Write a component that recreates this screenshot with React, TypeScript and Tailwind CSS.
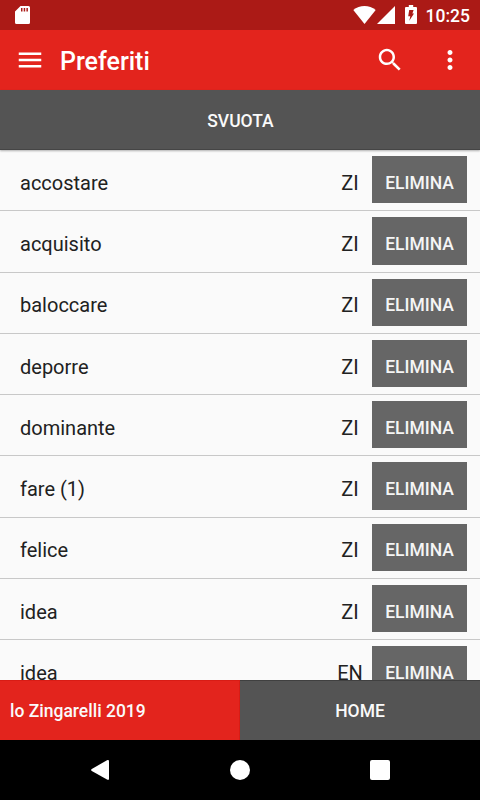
import {FunctionComponent} from 'react'

interface IFavorite {
    word: string
    dictionary: string
}

interface IProps {
    favorite: IFavorite
}

const favorites: IFavorite[] = [
    {word: "accostare", dictionary: "ZI"},
    {word: "acquisito", dictionary: "ZI"},
    {word: "baloccare", dictionary: "ZI"},
    {word: "deporre", dictionary: "ZI"},
    {word: "dominante", dictionary: "ZI"},
    {word: "fare (1)", dictionary: "ZI"},
    {word: "felice", dictionary: "ZI"},
    {word: "idea", dictionary: "ZI"},
    {word: "idea", dictionary: "EN"},
]

const StatusBar: FunctionComponent = () => (
    <div className="flex h-[30px] shrink-0 items-center bg-[#ab1a16] pl-[15px] pr-[10px] text-white">
        <svg className="h-[18px] w-[15px]" viewBox="0 0 15 18" fill="currentColor">
            <path fillRule="evenodd"
                  d="M5.5 0H13.5Q15 0 15 1.5V16.5Q15 18 13.5 18H1.5Q0 18 0 16.5V5.5ZM6 2V5.5H7.5V2ZM8.7 2V5.5H10.2V2ZM11.4 2V5.5H12.9V2Z"/>
        </svg>
        <svg className="ml-auto h-[18px] w-[23px]" viewBox="0 0 23 18" fill="currentColor">
            <path d="M0.3 3.9C6.5 -1.3 16.5 -1.3 22.7 3.9L11.5 18Z"/>
        </svg>
        <svg className="ml-px h-[18px] w-[18px]" viewBox="0 0 18 18" fill="currentColor">
            <path d="M18 0V18H0Z"/>
        </svg>
        <svg className="mb-px ml-[10px] h-[19px] w-[12px]" viewBox="0 0 12 19" fill="currentColor">
            <path fillRule="evenodd"
                  d="M3.8 0H8.2V2H11Q12 2 12 3V18Q12 19 11 19H1Q0 19 0 18V3Q0 2 1 2H3.8ZM4.2 5H8.6L7.4 8.6H9L4.3 15.8L5.3 11.2H3.2Z"/>
        </svg>
        <span className="ml-[9px] pt-[2px] text-[17.5px] font-medium leading-[28px]">10:25</span>
    </div>
)

const Toolbar: FunctionComponent = () => (
    <div className="flex h-[60px] shrink-0 items-center bg-[#e3241d] pl-[15px] pr-[15px] text-white">
        <svg className="h-[30px] w-[30px]" viewBox="0 0 24 24" fill="currentColor">
            <path d="M3 18h18v-2H3v2zm0-5h18v-2H3v2zm0-7v2h18V6H3z"/>
        </svg>
        <h1 className="ml-[15px] pt-[4px] text-[25px] font-medium leading-[56px]">Preferiti</h1>
        <svg className="ml-auto h-[30px] w-[30px]" viewBox="0 0 24 24" fill="currentColor">
            <path
                d="M15.5 14h-.79l-.28-.27C15.41 12.59 16 11.11 16 9.5 16 5.91 13.09 3 9.5 3S3 5.91 3 9.5 5.91 16 9.5 16c1.61 0 3.09-.59 4.23-1.57l.27.28v.79l5 4.99L20.49 19l-4.99-5zm-6 0C7.01 14 5 11.99 5 9.5S7.01 5 9.5 5 14 7.01 14 9.5 11.99 14 9.5 14z"/>
        </svg>
        <svg className="ml-[30px] h-[30px] w-[30px]" viewBox="0 0 24 24" fill="currentColor">
            <path
                d="M12 8c1.1 0 2-.9 2-2s-.9-2-2-2-2 .9-2 2 .9 2 2 2zm0 2c-1.1 0-2 .9-2 2s.9 2 2 2 2-.9 2-2-.9-2-2-2zm0 6c-1.1 0-2 .9-2 2s.9 2 2 2 2-.9 2-2-.9-2-2-2z"/>
        </svg>
    </div>
)

const FavoriteRow: FunctionComponent<IProps> = ({favorite}) => (
    <li className="flex h-[61.25px] shrink-0 items-start border-b border-[#c8c8c8] pl-5 pr-[13px] pt-[6.2px]">
        <span className="pt-[2.75px] text-[20px] leading-[48px] text-[#212121]">{favorite.word}</span>
        <span className="ml-auto w-[52px] pt-[2.75px] text-center text-[20px] leading-[48px] text-[#212121]">
            {favorite.dictionary}
        </span>
        <button
            className="ml-[-4px] h-[47.2px] w-[95px] bg-[#666666] pt-[6px] text-[17.5px] font-medium leading-[40px] text-[#f5f5f5]">
            ELIMINA
        </button>
    </li>
)

const NavigationBar: FunctionComponent = () => (
    <div className="flex h-[60px] shrink-0 items-center justify-center gap-[120px] bg-black text-white">
        <svg className="h-5 w-5" viewBox="0 0 20 20" fill="currentColor">
            <path d="M17 0.2Q19 -0.6 19 1.2V18.8Q19 20.6 17 19.6L1.8 11Q0.4 10 1.8 9Z"/>
        </svg>
        <div className="h-5 w-5 rounded-full bg-white"/>
        <div className="h-5 w-5 rounded-[2px] bg-white"/>
    </div>
)

const App: FunctionComponent = () => {
    return (
        <div className="flex h-[800px] w-[480px] flex-col overflow-hidden bg-[#fafafa] font-['Roboto',sans-serif]">
            <StatusBar/>
            <Toolbar/>
            <button
                className="z-10 h-[60px] w-full shrink-0 border-b border-[#454545] bg-[#545454] pl-px pt-[4px] text-[17.5px] font-medium text-[#fafafa] shadow-[0_1px_2px_rgba(0,0,0,0.3)]">
                SVUOTA
            </button>
            <ul className="flex min-h-0 flex-1 flex-col overflow-hidden">
                {favorites.map((favorite, index) => <FavoriteRow key={index} favorite={favorite}/>)}
            </ul>
            <div className="flex h-[60px] shrink-0 text-[17.5px] font-medium text-[#fafafa]">
                <div className="flex w-[240px] items-center border-r border-t border-[#d81c15] bg-[#e3241d] pl-[10px] pt-[2px]">
                    lo Zingarelli 2019
                </div>
                <button className="flex-1 border-t border-[#404040] bg-[#545454] pt-[2px]">HOME</button>
            </div>
            <NavigationBar/>
        </div>
    )
};

export default App;
